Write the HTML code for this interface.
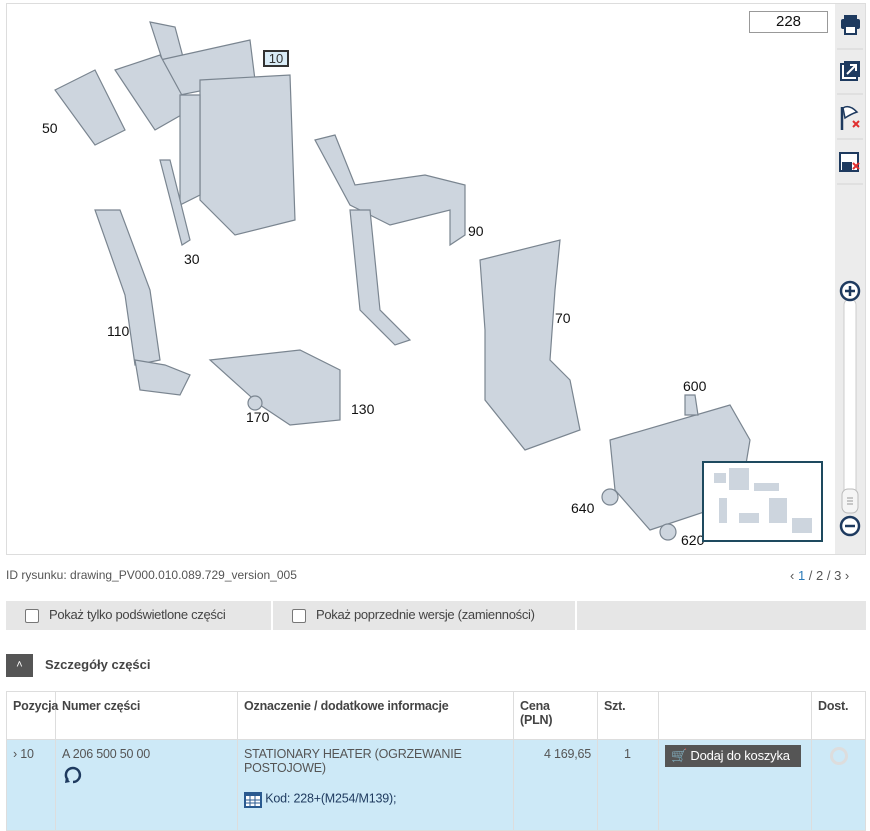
<!DOCTYPE html>
<html><head><meta charset="utf-8"><style>
*{box-sizing:border-box;margin:0;padding:0}
body{width:870px;height:830px;background:#fff;font-family:"Liberation Sans",Arial,sans-serif;color:#333;position:relative;overflow:hidden}
.abs{position:absolute}
.draw{left:6px;top:3px;width:860px;height:552px;border:1px solid #ddd;background:#fff}
.side{left:835px;top:4px;width:30px;height:550px;background:#ececec}
.lbl{position:absolute;font-size:14px;color:#111}
.cb{display:inline-block;width:14px;height:14px;border:1px solid #777;background:#fff;border-radius:2px;vertical-align:middle;margin-right:10px}
table{border-collapse:collapse;position:absolute;left:6px;top:691px;width:860px;font-size:12.5px;table-layout:fixed;letter-spacing:-0.2px}
td,th{border:1px solid #ddd;vertical-align:top;padding:7px 6px;text-align:left}
th{font-weight:bold;color:#444;height:48px}
tr.hl td{background:#cde9f7;height:91px;color:#555}
</style></head><body>
<div class="abs draw"></div>
<svg class="abs" style="left:40px;top:15px" width="790" height="535" viewBox="40 15 790 535">
 <g fill="#cdd5de" stroke="#7a8590" stroke-width="1.2">
  <path d="M150 22 l25 5 l8 30 l-20 5 Z"/>
  <path d="M160 60 L250 40 L255 80 L180 95 Z"/>
  <path d="M200 80 L290 75 L295 220 L235 235 L200 200 Z"/>
  <path d="M55 90 l40 -20 l30 60 l-30 15 Z"/>
  <path d="M115 70 l45 -15 l30 55 l-35 20 Z"/>
  <path d="M180 95 l20 0 l0 100 l-20 10 Z"/>
  <path d="M315 140 l20 -5 l20 50 l70 -10 l40 10 l0 50 l-15 10 l0 -35 l-60 15 l-40 -20 Z"/>
  <path d="M350 210 l20 0 l10 100 l30 30 l-15 5 l-35 -35 Z"/>
  <path d="M95 210 l25 0 l30 80 l10 70 l-25 5 l-10 -70 Z"/>
  <path d="M135 360 l30 5 l25 10 l-10 20 l-40 -5 Z"/>
  <path d="M210 360 l90 -10 l40 20 l0 50 l-50 5 l-30 -20 Z"/>
  <path d="M480 260 l80 -20 l-5 50 l-5 70 l20 20 l10 50 l-55 20 l-40 -50 l0 -70 Z"/>
  <path d="M610 440 l120 -35 l20 35 l-10 60 l-90 30 l-35 -40 Z"/>
  <path d="M685 395 l10 0 l3 20 l-13 0 Z"/>
  <circle cx="610" cy="497" r="8"/><circle cx="668" cy="532" r="8"/><circle cx="255" cy="403" r="7"/>
  <path d="M160 160 l10 0 l20 80 l-8 5 Z"/>
 </g>
</svg>
<div class="abs side">
 <svg width="30" height="550" viewBox="0 0 30 550">
  <g fill="#1e3a5f">
   <rect x="6" y="15" width="19" height="10" rx="2"/><rect x="9" y="11" width="13" height="5"/><rect x="10" y="22" width="11" height="8" fill="#fff" stroke="#1e3a5f" stroke-width="2"/>
   <rect x="6" y="60" width="16" height="16" fill="#fff" stroke="#1e3a5f" stroke-width="2"/><rect x="9" y="57" width="16" height="16"/><path d="M12 70 L21 61 M15 61 H21 V67" stroke="#fff" stroke-width="2" fill="none"/>
   <path d="M7 103 V126" stroke="#1e3a5f" stroke-width="2.5"/><path d="M8 104 Q14 100 22 108 Q16 110 10 114 Z" fill="#fff" stroke="#1e3a5f" stroke-width="1.5"/>
   <rect x="5" y="149" width="18" height="18" fill="#fff" stroke="#1e3a5f" stroke-width="2"/><rect x="7" y="158" width="10" height="8"/>
  </g>
  <path d="M18 117 l6 6 M24 117 l-6 6 M18 159 l6 6 M24 159 l-6 6" stroke="#e03030" stroke-width="2"/>
  <g stroke="#d4d4d4"><line x1="2" y1="45" x2="28" y2="45"/><line x1="2" y1="90" x2="28" y2="90"/><line x1="2" y1="135" x2="28" y2="135"/><line x1="2" y1="180" x2="28" y2="180"/></g>
  <rect x="9" y="295" width="12" height="200" rx="6" fill="#fff" stroke="#ccc"/>
  <rect x="7" y="485" width="16" height="24" rx="6" fill="#f5f5f5" stroke="#bbb"/>
  <path d="M12 494h6M12 497h6M12 500h6" stroke="#999"/>
  <circle cx="15" cy="287" r="9" fill="#fff" stroke="#1e3a5f" stroke-width="2.5"/><path d="M10 287h10M15 282v10" stroke="#1e3a5f" stroke-width="2.5"/>
  <circle cx="15" cy="522" r="9" fill="#fff" stroke="#1e3a5f" stroke-width="2.5"/><path d="M10 522h10" stroke="#1e3a5f" stroke-width="2.5"/>
 </svg>
</div>
<div class="abs" style="left:749px;top:11px;width:79px;height:22px;border:1px solid #999;background:#fff;font-size:15px;text-align:center;line-height:20px;color:#111">228</div>
<div class="abs" style="left:263px;top:50px;width:26px;height:17px;border:2px solid #333;background:#d9ecf7;font-size:13px;text-align:center;line-height:13px">10</div>
<div class="lbl" style="left:42px;top:120px">50</div>
<div class="lbl" style="left:184px;top:251px">30</div>
<div class="lbl" style="left:468px;top:223px">90</div>
<div class="lbl" style="left:107px;top:323px">110</div>
<div class="lbl" style="left:555px;top:310px">70</div>
<div class="lbl" style="left:351px;top:401px">130</div>
<div class="lbl" style="left:246px;top:409px">170</div>
<div class="lbl" style="left:683px;top:378px">600</div>
<div class="lbl" style="left:571px;top:500px">640</div>
<div class="lbl" style="left:681px;top:532px">620</div>
<div class="abs" style="left:702px;top:461px;width:121px;height:81px;border:2px solid #1e4a5f;background:#fff">
 <svg width="117" height="77"><g fill="#cdd5de"><rect x="10" y="10" width="12" height="10"/><rect x="25" y="5" width="20" height="22"/><rect x="50" y="20" width="25" height="8"/><rect x="15" y="35" width="8" height="25"/><rect x="65" y="35" width="18" height="25"/><rect x="88" y="55" width="20" height="15"/><rect x="35" y="50" width="20" height="10"/></g></svg>
</div>
<div class="abs" style="left:6px;top:568px;font-size:12px;color:#555">ID rysunku: drawing_PV000.010.089.729_version_005</div>
<div class="abs" style="left:790px;top:568px;font-size:13px;color:#555">‹ <span style="color:#2a7ab8">1</span> / 2 / 3 ›</div>
<div class="abs" style="left:6px;top:601px;width:860px;height:29px;background:#e6e6e6"></div>
<div class="abs" style="left:271px;top:601px;width:2px;height:29px;background:#fff"></div>
<div class="abs" style="left:575px;top:601px;width:2px;height:29px;background:#fff"></div>
<div class="abs" style="left:25px;top:607px;font-size:13px;color:#444;letter-spacing:-0.3px"><span class="cb"></span>Pokaż tylko podświetlone części</div>
<div class="abs" style="left:292px;top:607px;font-size:13px;color:#444;letter-spacing:-0.3px"><span class="cb"></span>Pokaż poprzednie wersje (zamienności)</div>
<div class="abs" style="left:6px;top:654px;width:27px;height:23px;background:#555;color:#fff;font-size:11px;text-align:center;line-height:23px">˄</div>
<div class="abs" style="left:45px;top:657px;font-size:13px;font-weight:bold;color:#444">Szczegóły części</div>
<table>
<colgroup><col style="width:49px"><col style="width:182px"><col style="width:276px"><col style="width:84px"><col style="width:61px"><col style="width:153px"><col></colgroup>
<tr><th>Pozycja</th><th>Numer części</th><th>Oznaczenie / dodatkowe informacje</th><th>Cena<br>(PLN)</th><th>Szt.</th><th></th><th>Dost.</th></tr>
<tr class="hl"><td>› 10</td><td>A 206 500 50 00<br><svg width="22" height="22" style="margin-top:3px"><path d="M6 16 A7 7 0 1 1 11 18" fill="none" stroke="#1e3a5f" stroke-width="2.5"/><path d="M4 13 l4 5 l-5 1z" fill="#1e3a5f"/></svg></td>
<td>STATIONARY HEATER (OGRZEWANIE POSTOJOWE)<div style="margin-top:15px;color:#1e3a5f"><svg width="18" height="18" style="vertical-align:middle"><rect x="1" y="3" width="16" height="14" fill="#fff" stroke="#2a5a90" stroke-width="2"/><rect x="1" y="3" width="16" height="3" fill="#2a5a90"/><path d="M1 10h16M1 13h16M6 6v11M11 6v11" stroke="#2a5a90"/></svg> Kod: 228+(M254/M139);</div></td>
<td style="text-align:right">4 169,65</td><td style="padding-left:26px">1</td>
<td><div style="background:#555;color:#fff;font-size:13px;padding:3px 6px;width:136px;margin-top:-2px;white-space:nowrap">🛒 Dodaj do koszyka</div></td>
<td><div style="width:18px;height:18px;border:3px solid #ddd;border-radius:50%;margin:0 auto"></div></td></tr>
</table>
</body></html>
